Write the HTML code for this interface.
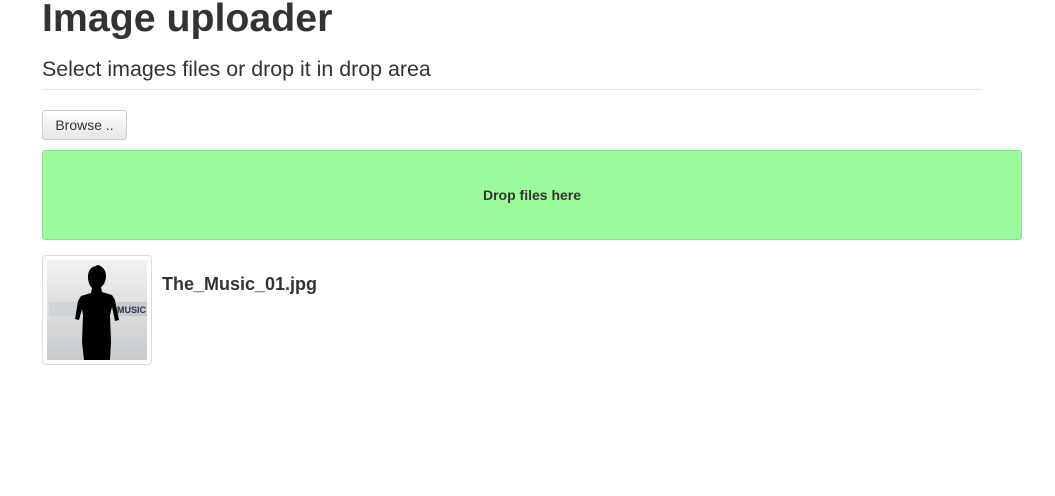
<!DOCTYPE html>
<html><head><style>
body{margin:0;width:1055px;height:496px;background:#fff;font-family:"Liberation Sans",sans-serif;color:#333;position:relative;overflow:hidden}
h1{position:absolute;left:42px;top:-4px;margin:0;font-size:39.3px;font-weight:bold;line-height:44px}
.sub{position:absolute;left:42px;top:57px;font-size:21.4px;line-height:24px}
.hr{position:absolute;left:42px;top:89px;width:940px;height:1px;background:#e5e5e5}
.btn{position:absolute;left:42px;top:110px;width:83px;height:28px;border:1px solid #ccc;border-radius:3px;background:linear-gradient(#fff,#e6e6e6);font-size:14px;line-height:28px;text-align:center;color:#333}
.drop{position:absolute;left:42px;top:150px;width:978px;height:88px;background:#99fb99;border:1px solid #8ee08e;border-radius:3px;text-align:center;line-height:88px;font-size:14px;font-weight:bold}
.thumb{position:absolute;left:42px;top:255px;width:108px;height:108px;border:1px solid #ddd;border-radius:4px;background:#fff}
.img{position:absolute;left:4px;top:4px;width:100px;height:100px;background:linear-gradient(#f2f2f2,#e0e0e0 40%,#c8cbce)}
.name{position:absolute;left:162px;top:274px;font-size:18px;font-weight:bold}
</style></head><body>
<h1>Image uploader</h1>
<div class="sub">Select images files or drop it in drop area</div>
<div class="hr"></div>
<div class="btn">Browse ..</div>
<div class="drop">Drop files here</div>
<div class="thumb"><div class="img">
<svg width="100" height="100" viewBox="0 0 100 100">
<rect x="2" y="42" width="30" height="14" fill="#c8d0d8" opacity=".7"/>
<rect x="70" y="42" width="34" height="14" fill="#b8c0c8" opacity=".7"/>
<text x="70" y="53" font-size="9" font-weight="bold" fill="#334" font-family="Liberation Sans">MUSIC</text>
<path d="M50 6c-6 0-9 5-9 11 0 5 2 9 4 11l-1 5-10 3-3 5-3 18 4 1 3-11 1 6-1 27 2 18h26l1-18-1-27 2-8 3 14 4-1-4-20-3-5-10-3-1-5c3-2 5-6 5-11 0-6-4-11-10-11z" fill="#000"/>
</svg></div></div>
<div class="name">The_Music_01.jpg</div>
</body></html>
